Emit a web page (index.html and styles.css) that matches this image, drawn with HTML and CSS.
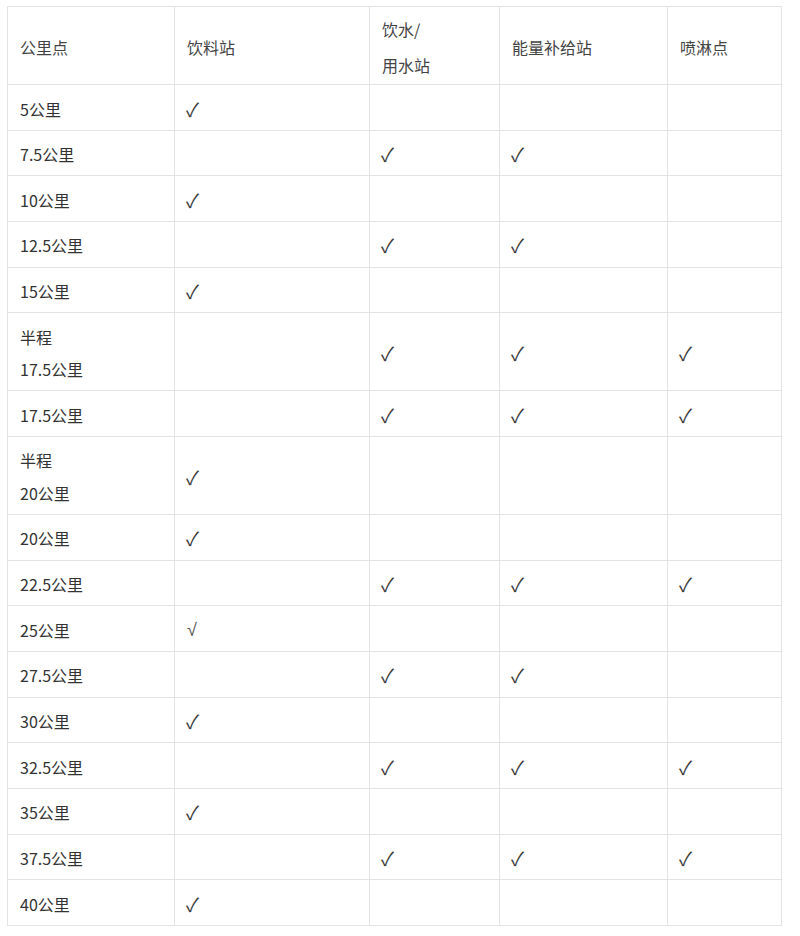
FILE: index.html
```html
<!DOCTYPE html>
<html lang="zh-CN">
<head>
<meta charset="utf-8">
<title>补给站分布</title>
<link rel="stylesheet" href="styles.css">
</head>
<body>
<table class="supply">
  <colgroup>
    <col class="c1"><col class="c2"><col class="c3"><col class="c4"><col class="c5">
  </colgroup>
  <thead>
    <tr>
      <th>公里点</th>
      <th>饮料站</th>
      <th>饮水/<br>用水站</th>
      <th>能量补给站</th>
      <th>喷淋点</th>
    </tr>
  </thead>
  <tbody>
    <tr><td>5公里</td><td class="ok">✓</td><td></td><td></td><td></td></tr>
    <tr><td>7.5公里</td><td></td><td class="ok">✓</td><td class="ok">✓</td><td></td></tr>
    <tr><td>10公里</td><td class="ok">✓</td><td></td><td></td><td></td></tr>
    <tr><td>12.5公里</td><td></td><td class="ok">✓</td><td class="ok">✓</td><td></td></tr>
    <tr><td>15公里</td><td class="ok">✓</td><td></td><td></td><td></td></tr>
    <tr><td>半程<br>17.5公里</td><td></td><td class="ok">✓</td><td class="ok">✓</td><td class="ok">✓</td></tr>
    <tr><td>17.5公里</td><td></td><td class="ok">✓</td><td class="ok">✓</td><td class="ok">✓</td></tr>
    <tr><td>半程<br>20公里</td><td class="ok">✓</td><td></td><td></td><td></td></tr>
    <tr><td>20公里</td><td class="ok">✓</td><td></td><td></td><td></td></tr>
    <tr><td>22.5公里</td><td></td><td class="ok">✓</td><td class="ok">✓</td><td class="ok">✓</td></tr>
    <tr><td>25公里</td><td class="root">√</td><td></td><td></td><td></td></tr>
    <tr><td>27.5公里</td><td></td><td class="ok">✓</td><td class="ok">✓</td><td></td></tr>
    <tr><td>30公里</td><td class="ok">✓</td><td></td><td></td><td></td></tr>
    <tr><td>32.5公里</td><td></td><td class="ok">✓</td><td class="ok">✓</td><td class="ok">✓</td></tr>
    <tr><td>35公里</td><td class="ok">✓</td><td></td><td></td><td></td></tr>
    <tr><td>37.5公里</td><td></td><td class="ok">✓</td><td class="ok">✓</td><td class="ok">✓</td></tr>
    <tr><td>40公里</td><td class="ok">✓</td><td></td><td></td><td></td></tr>
  </tbody>
</table>
</body>
</html>
```

FILE: styles.css
```css
html, body {
  margin: 0;
  background: #ffffff;
}
body {
  padding: 6px 7px;
  font-family: "Noto Sans CJK SC", "Noto Sans", sans-serif;
  font-size: 16px;
  color: #333333;
}
.supply {
  border-collapse: collapse;
  table-layout: fixed;
  width: 774px;
}
.c1 { width: 167px; }
.c2 { width: 195px; }
.c3 { width: 130px; }
.c4 { width: 168px; }
.c5 { width: 114px; }
.supply th,
.supply td {
  border: 1px solid #e3e3e3;
  text-align: left;
  vertical-align: middle;
  padding: 7.5px 12px 4.83px;
  line-height: 32.33px;
  font-weight: normal;
}
.supply th {
  color: #444444;
  padding: 3.5px 12px 1.5px;
  line-height: 36px;
}
.supply td.ok {
  font-size: 19px;
  color: #3a3a3a;
  padding-left: 11px;
}
.supply td.root {
  font-family: "Liberation Sans", "DejaVu Sans", sans-serif;
  font-size: 18px;
  color: #555555;
}
```
